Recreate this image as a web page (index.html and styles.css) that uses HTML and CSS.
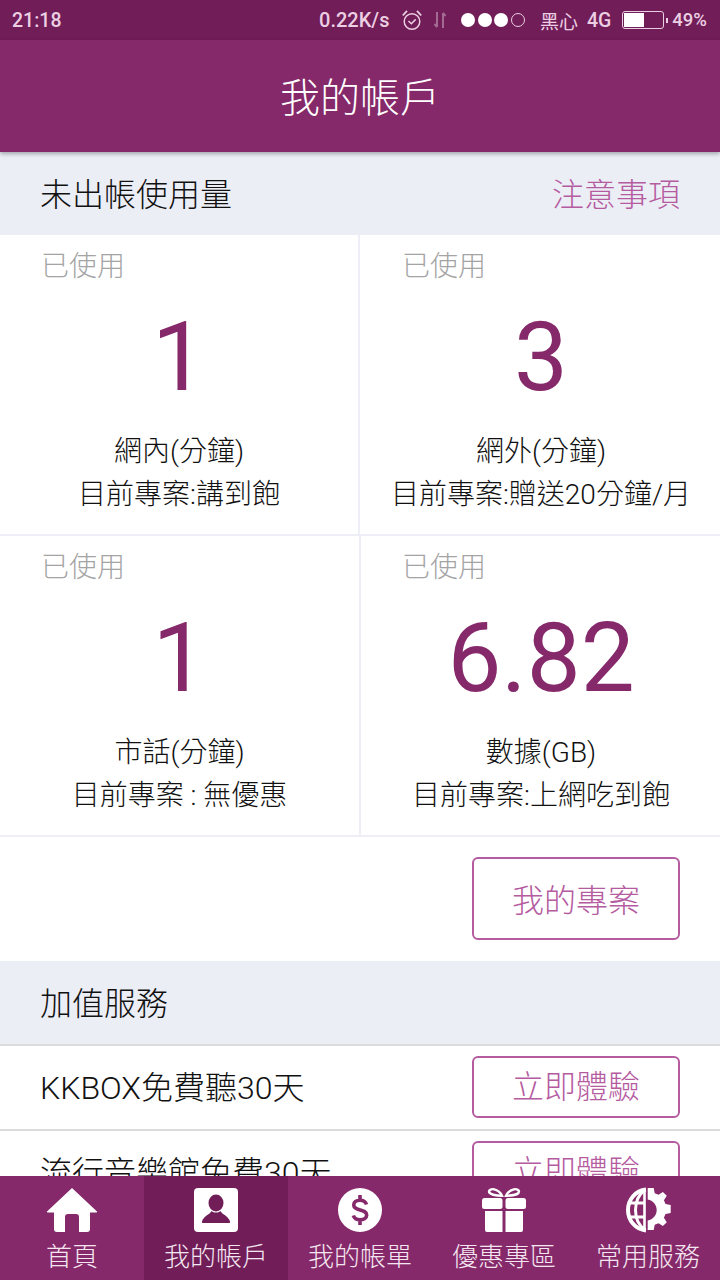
FILE: index.html
```html
<!DOCTYPE html>
<html lang="zh-Hant">
<head>
	<meta charset="UTF-8">
	<title>我的帳戶</title>
	<link rel="stylesheet" href="styles.css">
</head>
<body>

<div class="app">
	<div class="statusbar">
		<span class="clock">21:18</span>
		<div class="status-right">
			<span class="speed">0.22K/s</span>
			<svg class="alarm" width="20" height="22" viewBox="0 0 20 22">
				<circle cx="10" cy="12.5" r="7.800" fill="none" stroke="#eccfe2" stroke-width="1.500"/>
				<path d="M6.500 12l2.800 2.800 4.400-4.400" fill="none" stroke="#eccfe2" stroke-width="1.500"/>
				<path d="M.8 6.500 5 1.800M19.200 6.500 15 1.800" fill="none" stroke="#eccfe2" stroke-width="1.800"/>
			</svg>
			<svg class="updown" width="14" height="18" viewBox="0 0 14 18">
				<path d="M4 1v15M1.500 13 4 16M10 17V2M10 2l2.500 3" fill="none" stroke="#a56a94" stroke-width="2"/>
			</svg>
			<div class="signal">
				<i></i><i></i><i></i><i class="off"></i>
			</div>
			<span class="carrier">黑心</span>
			<span class="net">4G</span>
			<div class="battery"><div class="battery-fill"></div></div>
			<div class="battery-tip"></div>
			<span class="percent">49%</span>
		</div>
	</div>

	<div class="topbar">我的帳戶</div>

	<div class="content">
		<div class="section-head">
			<span>未出帳使用量</span>
			<span class="note">注意事項</span>
		</div>

		<div class="usage">
			<div class="cell">
				<div class="used">已使用</div>
				<div class="num">1</div>
				<div class="name">網內(分鐘)</div>
				<div class="plan">目前專案:講到飽</div>
			</div>
			<div class="cell">
				<div class="used">已使用</div>
				<div class="num">3</div>
				<div class="name">網外(分鐘)</div>
				<div class="plan">目前專案:贈送20分鐘/月</div>
			</div>
			<div class="cell">
				<div class="used">已使用</div>
				<div class="num">1</div>
				<div class="name">市話(分鐘)</div>
				<div class="plan">目前專案 : 無優惠</div>
			</div>
			<div class="cell">
				<div class="used">已使用</div>
				<div class="num">6.82</div>
				<div class="name">數據(GB)</div>
				<div class="plan">目前專案:上網吃到飽</div>
			</div>
		</div>

		<div class="plan-action">
			<a class="btn btn-big">我的專案</a>
		</div>

		<div class="section-head section-line">
			<span>加值服務</span>
		</div>

		<div class="service">
			<span>KKBOX免費聽30天</span>
			<a class="btn">立即體驗</a>
		</div>
		<div class="service">
			<span>流行音樂館免費30天</span>
			<a class="btn">立即體驗</a>
		</div>
	</div>

	<div class="tabbar">
		<div class="tab">
			<svg width="52" height="46" viewBox="0 0 52 46">
				<path d="M26 1 51 24.500a.6.6 0 0 1-.4 1H44V42a3 3 0 0 1-3 3H33V30a3 3 0 0 0-3-3h-8a3 3 0 0 0-3 3v15h-8a3 3 0 0 1-3-3V25.500H1.400a.6.6 0 0 1-.4-1z" fill="#fff"/>
			</svg>
			<span>首頁</span>
		</div>
		<div class="tab active">
			<svg width="46" height="46" viewBox="0 0 46 46">
				<rect width="44" height="44" x="1" y="1" rx="4" fill="#fff"/>
				<ellipse cx="23" cy="16" rx="7.500" ry="8.500" fill="#701d58"/>
				<path d="M18.500 24c-1 3-8 5-9.500 10.500-.2 1 .3 1.500 1 1.500h26c.7 0 1.200-.5 1-1.500C35.500 29 28.500 27 27.500 24c-2.500 2-6.500 2-9 0z" fill="#701d58"/>
			</svg>
			<span>我的帳戶</span>
		</div>
		<div class="tab">
			<svg width="46" height="46" viewBox="0 0 46 46">
				<circle cx="23" cy="23" r="22" fill="#fff"/>
				<path d="M29.500 17.500c-.8-2.800-3.300-4.300-6.500-4.300-3.700 0-6.300 1.900-6.300 4.800 0 6.200 13 3.700 13 10 0 3-2.800 4.800-6.700 4.800-3.300 0-5.800-1.500-6.700-4.300M23 8v5M23 33v5" fill="none" stroke="#85296a" stroke-width="3.600"/>
			</svg>
			<span>我的帳單</span>
		</div>
		<div class="tab">
			<svg width="46" height="46" viewBox="0 0 46 46">
				<rect x="1" y="11" width="20.500" height="11" rx="2.500" fill="#fff"/>
				<rect x="24.500" y="11" width="20.500" height="11" rx="2.500" fill="#fff"/>
				<path d="M4 24h17.500v21H6a2 2 0 0 1-2-2zM24.500 24H42v19a2 2 0 0 1-2 2H24.500z" fill="#fff"/>
				<path d="M21 8.800C15 8.800 8 7.500 8 4.500 8 .8 17.500 1 21 8.800zM25 8.800C31 8.800 38 7.500 38 4.500 38 .8 28.500 1 25 8.800z" fill="none" stroke="#fff" stroke-width="2.400"/>
			</svg>
			<span>優惠專區</span>
		</div>
		<div class="tab">
			<svg width="46" height="46" viewBox="0 0 46 46">
				<g fill="none" stroke="#fff">
					<path d="M21 2.500C10.500 3.500 3 12.500 3 23s7.500 19.500 18 20.500" stroke-width="4"/>
					<path d="M20 3C13 8 10.500 15 10.500 23S13 38 20 43" stroke-width="3"/>
					<path d="M19.500 3v40" stroke-width="2.600"/>
					<path d="M3 16h17M3 30h17" stroke-width="3"/>
				</g>
				<path d="M24.500 1h6l1 5.200 3.800 1.600 4.400-2.900 3.900 3.900-2.900 4.400 1.600 3.800 5.200 1v8l-5.200 1-1.600 3.800 2.900 4.400-3.900 3.900-4.400-2.900-3.800 1.600-1 5.200h-6v-9.500c5.500-1 9-5.400 9-10.500s-3.500-9.500-9-10.500z" fill="#fff" transform="translate(-1.800 0)"/>
			</svg>
			<span>常用服務</span>
		</div>
	</div>
</div>

</body>
</html>
```

FILE: styles.css
```css
* {
	box-sizing: border-box;
}

html, body {
	margin: 0;
	padding: 0;
}

body {
	font-family: Roboto, "Noto Sans CJK TC", sans-serif;
	font-weight: 300;
	color: #111;
	background: #fff;
}

.app {
	width: 720px;
	height: 1280px;
	display: flex;
	flex-direction: column;
	overflow: hidden;
}

.statusbar {
	height: 40px;
	flex: none;
	display: flex;
	justify-content: space-between;
	align-items: center;
	padding: 0 13px 0 12px;
	background: #701d58;
	color: #eccfe2;
	font-size: 19.500px;
	font-weight: 500;
}

.status-right {
	display: flex;
	align-items: center;
}

.speed {
	font-size: 20px;
}

.alarm {
	margin-left: 13px;
}

.updown {
	margin-left: 11px;
}

.signal {
	display: flex;
	gap: 2.500px;
	margin-left: 14px;
}

.signal i {
	width: 14px;
	height: 14px;
	border-radius: 50%;
	background: #fff;
}

.signal i.off {
	background: none;
	border: 1px solid #eccfe2;
}

.carrier {
	margin-left: 15px;
	font-weight: 400;
	font-size: 19px;
}

.net {
	margin-left: 9px;
}

.battery {
	width: 42px;
	height: 18px;
	margin-left: 11px;
	padding: 1px;
	border: 1px solid #eccfe2;
	border-radius: 3px;
}

.battery-fill {
	width: 20px;
	height: 100%;
	background: #fff;
}

.battery-tip {
	width: 2px;
	height: 5px;
	margin-left: 2px;
	background: #eccfe2;
}

.percent {
	margin-left: 4px;
	font-size: 18.500px;
}

.topbar {
	height: 112px;
	flex: none;
	position: relative;
	display: flex;
	justify-content: center;
	align-items: center;
	padding-bottom: 3px;
	background: #85296a;
	color: #fff;
	font-size: 40px;
	box-shadow: 0 2px 4px rgba(0, 0, 0, 0.3);
}

.content {
	flex: 1;
	min-height: 0;
	overflow: hidden;
}

.section-head {
	height: 83px;
	display: flex;
	justify-content: space-between;
	align-items: center;
	padding: 0 40px 3px;
	background: #eceef6;
	font-size: 32px;
}

.section-line {
	height: 85px;
	border-bottom: 2px solid #dcdcdc;
}

.note {
	color: #b55b9f;
}

.usage {
	display: grid;
	grid-template-columns: 360px 360px;
	border-bottom: 2px solid #eeeff6;
}

.cell {
	height: 301px;
	display: flex;
	flex-direction: column;
	align-items: center;
	border-bottom: 2px solid #eeeff6;
	border-right: 2px solid #eeeff6;
	text-align: center;
}

.cell:nth-child(even) {
	border-right: none;
	padding-left: 2px;
}

.cell:nth-child(n+3) {
	height: 299px;
	border-bottom: none;
}

.cell:nth-child(3) {
	margin-right: -1px;
}

.used {
	align-self: flex-start;
	margin: 12px 0 0 41px;
	font-size: 28px;
	line-height: 40px;
	color: #a4a4a4;
}

.cell:nth-child(even) .used {
	margin-left: 40px;
}

.num {
	height: 120px;
	margin-top: 10px;
	font-weight: 400;
	font-size: 96px;
	line-height: 120px;
	color: #85296a;
}

.name {
	margin-top: 14px;
	font-size: 28px;
	line-height: 42px;
}

.plan {
	margin-top: 1px;
	font-size: 28px;
	line-height: 42px;
}

.plan-action {
	height: 124px;
	display: flex;
	justify-content: flex-end;
	padding: 20px 40px 0 0;
}

.btn {
	width: 208px;
	height: 62px;
	flex: none;
	display: flex;
	justify-content: center;
	align-items: center;
	border: 2px solid #b55b9f;
	border-radius: 6px;
	color: #b55b9f;
	font-size: 32px;
}

.btn-big {
	height: 83px;
	padding-bottom: 2px;
}

.service {
	height: 85px;
	display: flex;
	justify-content: space-between;
	align-items: flex-start;
	padding: 10px 40px 0;
	border-bottom: 2px solid #dcdcdc;
	font-size: 32px;
	line-height: 64px;
}

.tabbar {
	height: 104px;
	flex: none;
	display: flex;
	background: #85296a;
	color: #f4e6f0;
	font-size: 26px;
}

.tab {
	flex: 1;
	display: flex;
	flex-direction: column;
	align-items: center;
	padding-top: 11px;
}

.tab svg {
	display: block;
}

.tab span {
	margin-top: 5px;
	line-height: 38px;
}

.tab.active {
	background: #701d58;
}
```
